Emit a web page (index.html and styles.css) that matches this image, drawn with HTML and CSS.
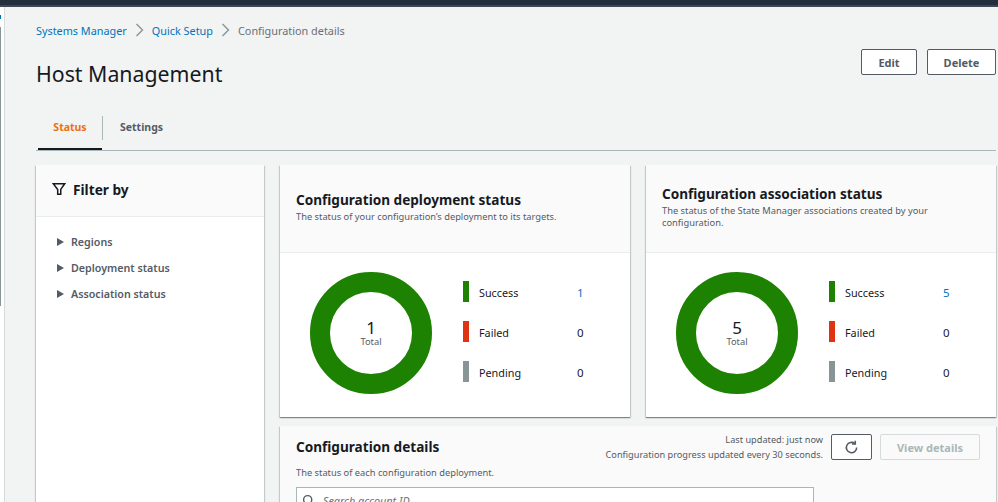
FILE: index.html
```html
<!DOCTYPE html>
<html lang="en">
<head>
<meta charset="utf-8">
<title>Host Management</title>
<link rel="stylesheet" href="styles.css">
</head>
<body>
<div class="topbar"></div>
<div class="shell">
  <div class="rail"><div class="rail-dot"></div><div class="rail-line"></div></div>
  <main class="main">
    <nav class="crumbs">
      <a>Systems Manager</a>
      <svg class="chev" viewBox="0 0 9 14"><path d="M1.500 1l6 6-6 6"/></svg>
      <a>Quick Setup</a>
      <svg class="chev" viewBox="0 0 9 14"><path d="M1.500 1l6 6-6 6"/></svg>
      <span>Configuration details</span>
    </nav>
    <header class="head">
      <h1>Host Management</h1>
      <div class="actions">
        <button class="btn btn-edit">Edit</button>
        <button class="btn btn-delete">Delete</button>
      </div>
    </header>
    <div class="tabs">
      <div class="tab tab-active">Status</div>
      <div class="tab-sep"></div>
      <div class="tab">Settings</div>
    </div>
    <div class="grid">
      <aside class="card filter">
        <div class="filter-head">
          <svg class="funnel" viewBox="0 0 16 16"><path d="M1.500 2h13L10 8.500V14H6.500V8.500z"/></svg>
          <h2>Filter by</h2>
        </div>
        <ul class="filter-list">
          <li><i class="caret"></i>Regions</li>
          <li><i class="caret"></i>Deployment status</li>
          <li><i class="caret"></i>Association status</li>
        </ul>
      </aside>
      <div class="content">
        <div class="status-row">
          <section class="card status">
            <div class="status-head">
              <h2>Configuration deployment status</h2>
              <p>The status of your configuration’s deployment to its targets.</p>
            </div>
            <div class="status-body">
              <div class="donut"><strong>1</strong><span>Total</span></div>
              <div class="legend">
                <div class="row"><i class="bar green"></i><span class="lab">Success</span><a class="val">1</a></div>
                <div class="row"><i class="bar red"></i><span class="lab">Failed</span><span class="val">0</span></div>
                <div class="row"><i class="bar grey"></i><span class="lab">Pending</span><span class="val">0</span></div>
              </div>
            </div>
          </section>
          <section class="card status">
            <div class="status-head">
              <h2>Configuration association status</h2>
              <p>The status of the State Manager associations created by your configuration.</p>
            </div>
            <div class="status-body">
              <div class="donut"><strong>5</strong><span>Total</span></div>
              <div class="legend">
                <div class="row"><i class="bar green"></i><span class="lab">Success</span><a class="val">5</a></div>
                <div class="row"><i class="bar red"></i><span class="lab">Failed</span><span class="val">0</span></div>
                <div class="row"><i class="bar grey"></i><span class="lab">Pending</span><span class="val">0</span></div>
              </div>
            </div>
          </section>
        </div>
        <section class="card details">
          <div class="details-top">
            <div class="details-title">
              <h2>Configuration details</h2>
              <p>The status of each configuration deployment.</p>
            </div>
            <div class="updated">
              <div>Last updated: just now</div>
              <div>Configuration progress updated every 30 seconds.</div>
            </div>
            <button class="btn btn-refresh" aria-label="Refresh">
              <svg viewBox="0 0 16 16"><path d="M13.500 8A5.500 5.500 0 1 1 11.500 3.800"/><path d="M12 0.800V4.300H8.500"/></svg>
            </button>
            <button class="btn btn-view">View details</button>
          </div>
          <div class="search">
            <svg viewBox="0 0 16 16"><circle cx="7" cy="7" r="5"/><path d="M11 11l4 4"/></svg>
            <span>Search account ID</span>
          </div>
        </section>
      </div>
    </div>
  </main>
</div>
</body>
</html>
```

FILE: styles.css
```css
* { box-sizing: border-box; }
html, body { margin: 0; height: 502px; overflow: hidden; }
body { background: #f2f3f3; font-family: "Noto Sans", "Open Sans", sans-serif; color: #16191f; }
h1, h2, p { margin: 0; }
.topbar { height: 7px; background: #232f3e; border-bottom: 2px solid #3d4855; }
.shell { display: flex; height: 495px; }
.rail { width: 5px; background: #fff; border-right: 1px solid #d5dbdb; padding-top: 8px; }
.rail-dot { width: 1px; height: 4px; background: #0073bb; }
.rail-line { width: 1px; height: 279px; margin-top: 8px; background: #879596; }
.main { flex: 1; min-width: 0; padding: 0 2px 0 31px; }
.crumbs { display: flex; align-items: center; height: 18px; margin-top: 14px; font-size: 10.850px; color: #687078; }
.crumbs a { color: #0073bb; }
.chev { width: 9px; height: 14px; margin: 0 8px; fill: none; stroke: #879596; stroke-width: 1.400; }
.head { display: flex; justify-content: space-between; height: 45px; margin-top: 10px; }
.head h1 { font-size: 21.300px; font-weight: 400; line-height: 28px; margin-top: 11px; }
.actions { display: flex; gap: 10px; align-items: flex-start; }
.btn { height: 26px; background: #fff; border: 1px solid #545b64; border-radius: 2px; color: #545b64; font: 700 11px "Noto Sans", sans-serif; padding: 0; }
.btn-edit { width: 56px; }
.btn-delete { width: 69px; }
.tabs { display: flex; align-items: flex-start; height: 38px; margin-top: 19px; border-bottom: 1px solid #aab7b8; font-size: 10.500px; font-weight: 700; color: #545b64; }
.tab { padding: 0 17px; height: 37px; line-height: 28px; white-space: nowrap; }
.tab-active { width: 64px; color: #ec7211; border-bottom: 2px solid #16191f; text-align: center; padding: 0; margin-left: 2px; }
.tab-sep { width: 1px; height: 24px; background: #aab7b8; margin-top: 3px; }
.grid { display: flex; gap: 16px; margin-top: 14px; }
.card { background: #fff; box-shadow: 0 1px 1px 0 rgba(0,28,36,.3), 1px 1px 1px 0 rgba(0,28,36,.15), -1px 1px 1px 0 rgba(0,28,36,.15); }
.filter { width: 228px; height: 400px; flex: none; }
.filter-head { display: flex; align-items: center; height: 52px; padding: 0 0 3px 16px; background: #fafafa; border-bottom: 1px solid #eaeded; }
.funnel { width: 14px; height: 14px; fill: none; stroke: #16191f; stroke-width: 1.700; margin-right: 7px; }
.filter-head h2 { font-size: 13.700px; font-weight: 700; }
.filter-list { list-style: none; margin: 12px 0 0; padding: 0 0 0 21px; font-size: 10.700px; font-weight: 600; color: #545b64; }
.filter-list li { display: flex; align-items: center; height: 26px; }
.caret { width: 0; height: 0; border-left: 7px solid #545b64; border-top: 4.500px solid transparent; border-bottom: 4.500px solid transparent; margin-right: 7px; }
.content { flex: 1; min-width: 0; }
.status-row { display: flex; gap: 16px; }
.status { flex: 1; height: 252px; }
.status-head { display: flex; flex-direction: column; justify-content: center; height: 88px; padding: 0 16px 3px; background: #fafafa; border-bottom: 1px solid #eaeded; }
.status-head h2 { font-size: 13.600px; line-height: 18px; font-weight: 700; }
.status-head p { font-size: 9.300px; line-height: 12.500px; color: #545b64; margin-top: 2px; }
.status-body { display: flex; align-items: center; padding: 0 0 4px 30px; height: 164px; }
.donut { width: 122px; height: 122px; border-radius: 50%; border: 20px solid #1d8102; display: flex; flex-direction: column; align-items: center; justify-content: center; }
.donut strong { font-size: 17px; line-height: 17px; font-weight: 400; }
.donut span { font-size: 9.300px; line-height: 11px; color: #545b64; }
.legend { margin: 0 0 3px 31px; width: 122px; }
.row { display: flex; align-items: center; height: 21px; margin-bottom: 19px; font-size: 10.800px; color: #16191f; }
.row:last-child { margin-bottom: 0; }
.bar { width: 6px; height: 21px; margin-right: 10px; }
.green { background: #1d8102; }
.red { background: #df3312; }
.grey { background: #879596; }
.lab { width: 98px; padding-top: 2px; }
.val { color: #16191f; font-size: 11.500px; padding-top: 1px; }
a.val { color: #0073bb; }
.details { margin-top: 9px; height: 90px; background: #fafafa; padding: 0 16px; }
.details-top { display: flex; align-items: flex-start; height: 61px; }
.details-title { flex: 1; padding-top: 12px; }
.details-title h2 { font-size: 13.600px; line-height: 18px; font-weight: 700; }
.details-title p { font-size: 9.300px; line-height: 12px; color: #545b64; margin-top: 11px; }
.updated { text-align: right; font-size: 9.200px; color: #545b64; line-height: 15px; padding-top: 6px; margin-right: 8px; }
.btn-refresh { width: 41px; margin-top: 8px; display: flex; align-items: center; justify-content: center; }
.btn-refresh svg { width: 15px; height: 15px; fill: none; stroke: #545b64; stroke-width: 1.700; }
.btn-view { width: 100px; margin: 8px 0 0 8px; background: #fafafa; border-color: #d5dbdb; color: #aab7b8; }
.search { display: flex; align-items: center; width: 518px; height: 26px; background: #fff; border: 1px solid #aab7b8; padding-left: 5px; font-size: 10.800px; font-style: italic; color: #687078; }
.search svg { width: 13px; height: 13px; fill: none; stroke: #545b64; stroke-width: 1.700; margin-right: 8px; }
```
